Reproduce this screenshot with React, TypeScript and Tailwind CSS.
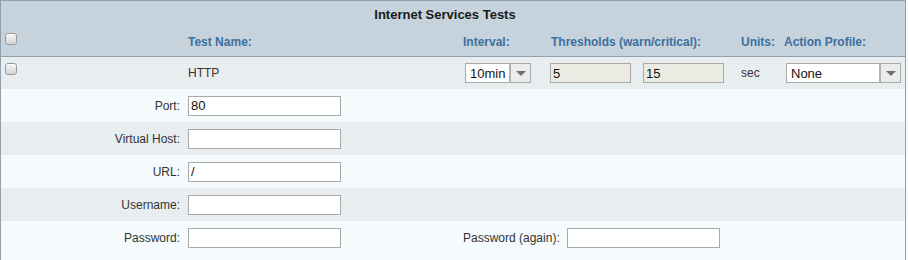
import React from "react";

const font = { fontFamily: '"Liberation Sans", Arial, sans-serif' };

function Check() {
  return (
    <div className="w-[12px] h-[12px] rounded-[3px] border border-[#9a9a9a] bg-gradient-to-b from-[#f4f4f4] to-[#d6d6d6] shadow-[inset_0_1px_0_#fff]" />
  );
}

function Select({ value, width }: { value: string; width: string }) {
  return (
    <div className={`${width} h-[20px] flex border border-[#a9a9a9] bg-white`}>
      <div className="flex-1 flex items-center pl-[4px] text-[13px] text-[#111] leading-none">{value}</div>
      <div className="w-[21px] h-full border-l-2 border-[#b3b3b3] bg-[#ececec] flex items-center justify-center">
        <div className="w-0 h-0 border-l-[5px] border-r-[5px] border-t-[5px] border-l-transparent border-r-transparent border-t-[#6f6f6f]" />
      </div>
    </div>
  );
}

function TextBox({ value = "", width = "w-[153px]", disabled = false }: { value?: string; width?: string; disabled?: boolean }) {
  return (
    <div
      className={`${width} h-[20px] border border-[#a9a9a9] ${disabled ? "bg-[#ebebe4]" : "bg-white"} flex items-center pl-[2px] text-[13px] text-[#111] leading-none`}
    >
      {value}
    </div>
  );
}

function FormRow({ label, value, shade, children }: { label: string; value?: string; shade: boolean; children?: React.ReactNode }) {
  return (
    <div className={`h-[33px] flex items-center ${shade ? "bg-[#e8edf0]" : "bg-[#f5fafd]"}`}>
      <div className="w-[179px] text-right text-[12px] text-[#333]">{label}</div>
      <div className="w-[8px]" />
      <TextBox value={value} />
      {children}
    </div>
  );
}

export default function App() {
  return (
    <div style={font} className="w-[908px] h-[260px] overflow-hidden bg-[#f5fafd]">
      <div className="w-[906px] h-[260px] border-l border-t border-r border-[#8fa1ad] bg-[#f5fafd]">
        <div className="bg-[#c6d3dc] border-b border-[#8fa1ad]">
          <div className="h-[27px] flex items-center justify-center pr-[16px] text-[13px] font-bold text-[#1a1a1a]">
            Internet Services Tests
          </div>
          <div className="h-[28px] flex items-center text-[12px] font-bold text-[#3d6f9f]">
            <div className="w-[187px] pl-[4px] pb-[6px]"><Check /></div>
            <div className="w-[275px]">Test Name:</div>
            <div className="w-[88px]">Interval:</div>
            <div className="w-[190px]">Thresholds (warn/critical):</div>
            <div className="w-[43px]">Units:</div>
            <div>Action Profile:</div>
          </div>
        </div>
        <div className="h-[32px] bg-[#e8edf0] flex items-center text-[12px] text-[#333]">
          <div className="w-[187px] pl-[4px] pb-[8px]"><Check /></div>
          <div className="w-[277px]">HTTP</div>
          <div className="w-[85px]"><Select value="10min" width="w-[66px]" /></div>
          <div className="w-[93px]"><TextBox value="5" width="w-[81px]" disabled /></div>
          <div className="w-[98px]"><TextBox value="15" width="w-[81px]" disabled /></div>
          <div className="w-[45px]">sec</div>
          <Select value="None" width="w-[115px]" />
        </div>
        <FormRow label="Port:" value="80" shade={false} />
        <FormRow label="Virtual Host:" shade={true} />
        <FormRow label="URL:" value="/" shade={false} />
        <FormRow label="Username:" shade={true} />
        <FormRow label="Password:" shade={false}>
          <div className="w-[122px]" />
          <div className="w-[104px] text-[12px] text-[#333]">Password (again):</div>
          <TextBox />
        </FormRow>
      </div>
    </div>
  );
}
